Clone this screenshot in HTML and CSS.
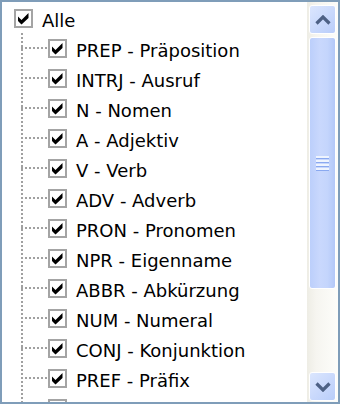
FILE: index.html
```html
<!DOCTYPE html>
<html lang="de">
  <head>
    <meta charset="UTF-8" />
    <title>Wortarten</title>
    <link rel="stylesheet" href="styles.css">
  </head>
  <body>
    <div class="tree">
      <div class="view">
        <div class="node root">
          <span class="check"><svg viewBox="0 0 15 15"><polygon points="2,5.5 5.5,9 12.5,2 12.5,7 5.5,13.5 2,10" /></svg></span>
          <span class="label">Alle</span>
        </div>
        <ul class="children">
          <li class="node"><span class="check"><svg viewBox="0 0 15 15"><polygon points="2,5.5 5.5,9 12.5,2 12.5,7 5.5,13.5 2,10" /></svg></span><span class="label">PREP - Präposition</span></li>
          <li class="node"><span class="check"><svg viewBox="0 0 15 15"><polygon points="2,5.5 5.5,9 12.5,2 12.5,7 5.5,13.5 2,10" /></svg></span><span class="label">INTRJ - Ausruf</span></li>
          <li class="node"><span class="check"><svg viewBox="0 0 15 15"><polygon points="2,5.5 5.5,9 12.5,2 12.5,7 5.5,13.5 2,10" /></svg></span><span class="label">N - Nomen</span></li>
          <li class="node"><span class="check"><svg viewBox="0 0 15 15"><polygon points="2,5.5 5.5,9 12.5,2 12.5,7 5.5,13.5 2,10" /></svg></span><span class="label">A - Adjektiv</span></li>
          <li class="node"><span class="check"><svg viewBox="0 0 15 15"><polygon points="2,5.5 5.5,9 12.5,2 12.5,7 5.5,13.5 2,10" /></svg></span><span class="label">V - Verb</span></li>
          <li class="node"><span class="check"><svg viewBox="0 0 15 15"><polygon points="2,5.5 5.5,9 12.5,2 12.5,7 5.5,13.5 2,10" /></svg></span><span class="label">ADV - Adverb</span></li>
          <li class="node"><span class="check"><svg viewBox="0 0 15 15"><polygon points="2,5.5 5.5,9 12.5,2 12.5,7 5.5,13.5 2,10" /></svg></span><span class="label">PRON - Pronomen</span></li>
          <li class="node"><span class="check"><svg viewBox="0 0 15 15"><polygon points="2,5.5 5.5,9 12.5,2 12.5,7 5.5,13.5 2,10" /></svg></span><span class="label">NPR - Eigenname</span></li>
          <li class="node"><span class="check"><svg viewBox="0 0 15 15"><polygon points="2,5.5 5.5,9 12.5,2 12.5,7 5.5,13.5 2,10" /></svg></span><span class="label">ABBR - Abkürzung</span></li>
          <li class="node"><span class="check"><svg viewBox="0 0 15 15"><polygon points="2,5.5 5.5,9 12.5,2 12.5,7 5.5,13.5 2,10" /></svg></span><span class="label">NUM - Numeral</span></li>
          <li class="node"><span class="check"><svg viewBox="0 0 15 15"><polygon points="2,5.5 5.5,9 12.5,2 12.5,7 5.5,13.5 2,10" /></svg></span><span class="label">CONJ - Konjunktion</span></li>
          <li class="node"><span class="check"><svg viewBox="0 0 15 15"><polygon points="2,5.5 5.5,9 12.5,2 12.5,7 5.5,13.5 2,10" /></svg></span><span class="label">PREF - Präfix</span></li>
          <li class="node"><span class="check"><svg viewBox="0 0 15 15"><polygon points="2,5.5 5.5,9 12.5,2 12.5,7 5.5,13.5 2,10" /></svg></span><span class="label">ART - Artikel</span></li>
        </ul>
      </div>
      <div class="scrollbar">
        <div class="btn">
          <svg viewBox="0 0 16 10"><polyline points="1.5,8.5 8,2 14.5,8.5" /></svg>
        </div>
        <div class="thumb"><span class="grip"></span></div>
        <div class="track"></div>
        <div class="btn">
          <svg viewBox="0 0 16 10"><polyline points="1.5,1.5 8,8 14.5,1.5" /></svg>
        </div>
      </div>
    </div>
  </body>
</html>
```

FILE: styles.css
```css
body {
  margin: 0;
  padding: 0;
  background-color: #fff;
  font-family: "DejaVu Sans", Tahoma, sans-serif;
  font-size: 18px;
  color: #000;
}

.tree {
  width: 340px;
  height: 404px;
  box-sizing: border-box;
  border: 2px solid #7f9db9;
  display: flex;
  overflow: hidden;
}

.view {
  flex: 1;
  padding: 1px 0 0 12px;
  overflow: hidden;
}

.node {
  height: 30px;
  display: flex;
  align-items: center;
}

.check {
  width: 19px;
  height: 19px;
  box-sizing: border-box;
  border: 2px solid #a4a4a4;
  background-color: #fff;
  flex: none;
  display: flex;
}
.check svg {
  width: 15px;
  height: 15px;
  fill: #000;
}

.label {
  margin-left: 9px;
  padding-top: 4px;
  white-space: nowrap;
}

.children {
  list-style: none;
  margin: 0 0 0 7px;
  padding: 0;
  background-image: repeating-linear-gradient(to bottom, #a0a0a0 0 2px, transparent 2px 4px);
  background-size: 2px 100%;
  background-repeat: no-repeat;
}
.children .node::before {
  content: "";
  width: 27px;
  height: 2px;
  flex: none;
  background-image: repeating-linear-gradient(to right, #a0a0a0 0 2px, transparent 2px 4px);
}

.scrollbar {
  width: 31px;
  flex: none;
  display: flex;
  flex-direction: column;
  padding: 3px 2px 1px 2px;
  box-sizing: border-box;
  background: linear-gradient(to right, #eeede5, #f6f5f0 30%, #fdfdfa);
}

.btn {
  height: 29px;
  flex: none;
  box-sizing: border-box;
  border: 1px solid #fff;
  border-radius: 3px;
  background: linear-gradient(135deg, #dbe6fe, #b9cdfa);
  display: flex;
  align-items: center;
  justify-content: center;
}
.btn svg {
  width: 16px;
  height: 10px;
  fill: none;
  stroke: #4d6185;
  stroke-width: 3.2;
}

.thumb {
  height: 252px;
  margin-top: 3px;
  flex: none;
  box-sizing: border-box;
  border: 1px solid #fff;
  border-radius: 3px;
  background: linear-gradient(to right, #bccffb, #c9d8fd 40%, #c4d5fc 70%, #b3c8f8);
  display: flex;
  align-items: center;
  justify-content: center;
}
.grip {
  width: 13px;
  height: 15px;
  background-image: repeating-linear-gradient(to bottom, #eef4fe 0 2px, #8aa9f0 2px 3px, transparent 3px 4px);
}

.track {
  flex: 1;
}
```
